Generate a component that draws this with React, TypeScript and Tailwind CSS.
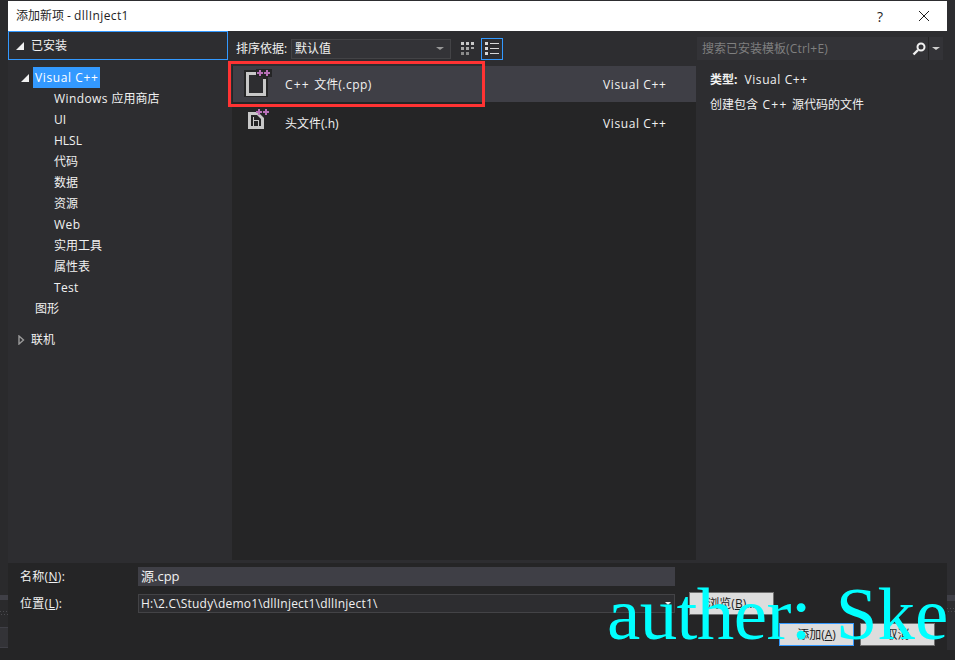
const UI = '"Open Sans","Noto Sans CJK SC",sans-serif';

function L({ children, t = "tracking-[0.6px]" }: { children: React.ReactNode; t?: string }) {
  return <span className={t}>{children}</span>;
}

function Tree({ label, indent = 54 }: { label: React.ReactNode; indent?: number }) {
  return (
    <div className="h-[21px] flex items-center text-[12px] text-[#f1f1f1] whitespace-pre" style={{ paddingLeft: indent - 8 }}>
      {label}
    </div>
  );
}

function Corner() {
  return <path d="M0 8 L8 8 L8 0 Z" fill="#f1f1f1" />;
}

function Grip() {
  return (
    <svg width="8" height="5" viewBox="0 0 8 5" fill="#4a4a4e">
      <path d="M0 0h1v1H0z M3 0h1v1H3z M6 0h1v1H6z M1 3h1v1H1z M4 3h1v1H4z M7 3h1v1H7z" />
    </svg>
  );
}

function CppIcon() {
  return (
    <svg width="28" height="28" viewBox="0 0 28 28" className="shrink-0 mb-[2px]">
      <rect x="0" y="1" width="24" height="27" fill="#252526" />
      <rect x="5" y="6" width="14" height="18" fill="#2d2d30" />
      <path d="M2 3 H14 V6 H5 V24 H19 V10 H22 V27 H2 Z" fill="#c8c8c8" />
      <rect x="12" y="0" width="16" height="8" fill="#252526" />
      <path d="M13 3 h6 v2 h-6z M15 1 h2 v6 h-2z M20 3 h6 v2 h-6z M22 1 h2 v6 h-2z" fill="#b871b8" />
    </svg>
  );
}

function HIcon() {
  return (
    <svg width="22" height="20" viewBox="0 0 22 20" className="shrink-0 mb-[8px]">
      <path d="M0 3 H10 L16 9 V20 H0 Z" fill="#c8c8c8" />
      <path d="M3 6 H9 L13 10 V17 H3 Z" fill="#252526" />
      <path d="M5 8 h1 v3 h5 v6 h-1 v-5 h-4 v5 h-1 z" fill="#c8c8c8" />
      <path d="M8 2 h6 v2 h-6z M10 0 h2 v6 h-2z M15 2 h6 v2 h-6z M17 0 h2 v6 h-2z" fill="#b871b8" />
    </svg>
  );
}

function Row({ icon, pad, name, lang, selected }: { icon: React.ReactNode; pad: string; name: React.ReactNode; lang: string; selected?: boolean }) {
  return (
    <div className={`h-[36px] flex items-center text-[12px] text-[#f1f1f1] ${selected ? "bg-[#3f3f46] ml-px" : "mt-[3px]"}`}>
      <div className={`${selected ? "w-[52px]" : "w-[53px]"} ${pad} flex items-center`}>{icon}</div>
      <div className="flex-1 whitespace-pre pt-[2px]">{name}</div>
      <div className="w-[93px] whitespace-nowrap pt-[2px] tracking-[0.6px]">{lang}</div>
    </div>
  );
}

export default function App() {
  const items: React.ReactNode[] = [
    <>
      <L t="tracking-[0.4px]">Windows </L>应用商店
    </>,
    "UI",
    "HLSL",
    "代码",
    "数据",
    "资源",
    <L t="tracking-[0.5px]">Web</L>,
    "实用工具",
    "属性表",
    <L t="tracking-[0.3px]">Test</L>,
  ];
  return (
    <div className="relative w-[955px] h-[660px] overflow-hidden bg-[#2d2d30] flex" style={{ fontFamily: UI }}>
      <div className="w-[8px] shrink-0 bg-[#2a2a2c] flex flex-col pt-[595px]">
        <div className="h-[5px] shrink-0 bg-[#3f3f46]" />
        <div className="h-[27px] shrink-0 flex items-center"><Grip /></div>
        <div className="h-[21px] shrink-0 bg-[#333337] border-y border-[#3f3f46]" />
        <div className="flex-1 bg-[#252526]" />
      </div>

      <div className="w-[939px] shrink-0 flex flex-col pt-px">
        <div className="h-[30px] shrink-0 bg-white flex items-center pl-[8px] text-[12px] text-[#1e1e1e]">
          <span className="flex-1 whitespace-pre">
            添加新项 - <L t="tracking-[0.4px]">dllInject1</L>
          </span>
          <span className="w-[14px] text-[14px] text-[#1e1e1e] mr-[31px] text-center">?</span>
          <svg width="12" height="12" viewBox="0 0 12 12" className="mr-[17px]">
            <path d="M1 1 L11 11 M11 1 L1 11" stroke="#1e1e1e" strokeWidth="1" fill="none" />
          </svg>
        </div>

        <div className="h-[532px] shrink-0 flex bg-[#2d2d30]">
          {/* left */}
          <div className="w-[220px] shrink-0 text-[12px] text-[#f1f1f1]">
            <div className="h-[29px] border border-[#3399ff] flex items-center w-[220px]">
              <svg width="8" height="8" viewBox="0 0 8 8" className="ml-[7px] mr-[7px]"><Corner /></svg>
              已安装
            </div>
            <div className="mt-[7px]">
              <div className="h-[21px] flex items-center">
                <svg width="8" height="8" viewBox="0 0 8 8" className="ml-[13px] mr-[4px]"><Corner /></svg>
                <span className="bg-[#3399ff] text-white h-[21px] flex items-center px-[2px] tracking-[0.6px]">Visual C++</span>
              </div>
              {items.map((i, n) => (
                <Tree key={n} label={i} />
              ))}
              <Tree label="图形" indent={35} />
              <div className="h-[21px] mt-[10px] flex items-center">
                <svg width="7" height="10" viewBox="0 0 7 10" className="ml-[10px] mr-[6px]">
                  <path d="M1 1 L5.5 5 L1 9 Z" fill="none" stroke="#9a9a9a" strokeWidth="1.4" />
                </svg>
                联机
              </div>
            </div>
          </div>
          <div className="w-[4px] shrink-0" />
          {/* centre */}
          <div className="w-[464px] shrink-0 flex flex-col">
            <div className="h-[35px] shrink-0 flex items-center text-[12px] text-[#f1f1f1]">
              <span className="w-[59px] pl-[4px] whitespace-nowrap">排序依据:</span>
              <div className="w-[160px] h-[20px] bg-[#333337] border border-[#434346] flex items-center pl-[3px] pr-[6px] justify-between">
                <span>默认值</span>
                <span className="w-0 h-0 border-x-[4px] border-x-transparent border-t-[3px] border-t-[#999999]" />
              </div>
              <svg width="13" height="13" viewBox="0 0 13 13" className="ml-[10px]">
                <path d="M0 0h3v3H0z M5 0h3v3H5z M10 0h3v3h-3z" fill="#c8c8c8" />
                <path d="M0 5h3v3H0z M5 5h3v3H5z M10 5h3v2h-3z" fill="#a8a8a8" />
                <path d="M0 10h3v3H0z M5 10h3v3H5z" fill="#8a8a8a" />
              </svg>
              <div className="ml-[7px] w-[22px] h-[22px] border-[1.5px] border-[#3399ff] flex items-center justify-center">
                <svg width="15" height="13" viewBox="0 0 15 13" fill="#d8d8d8">
                  <path d="M0 0h3v3H0z M0 5h3v3H0z M0 10h3v3H0z M5 1h9v1H5z M5 6h9v1H5z M5 11h9v1H5z" />
                </svg>
              </div>
            </div>
            <div className="flex-1 bg-[#252526] mb-[3px]">
              <div className="relative">
                <Row
                  icon={<CppIcon />}
                  pad="pl-[11px]"
                  name={
                    <>
                      <L t="tracking-[1.2px]">C++ </L>文件<L t="tracking-[0.5px]">(.cpp)</L>
                    </>
                  }
                  lang="Visual C++"
                  selected
                />
                <Row icon={<HIcon />} pad="pl-[16px]" name="头文件(.h)" lang="Visual C++" />
                <div className="absolute left-[-4px] top-[-5px] w-[257px] h-[46px] border-[3px] border-[#ff3333]" />
              </div>
            </div>
          </div>
          {/* right */}
          <div className="flex-1 flex flex-col text-[12px] text-[#f1f1f1]">
            <div className="h-[23px] mt-[6px] bg-[#333337] flex items-center ml-[1px] mr-[4px]">
              <span className="flex-1 pl-[5px] text-[#7f7f7f] whitespace-pre">
                搜索已安装模板<L t="tracking-[0.2px]">(Ctrl+E)</L>
              </span>
              <svg width="14" height="14" viewBox="0 0 14 14" className="mr-[2px]">
                <circle cx="9" cy="5" r="3.5" fill="none" stroke="#f1f1f1" strokeWidth="2" />
                <path d="M6 8 L1.5 12.5" stroke="#f1f1f1" strokeWidth="2.4" />
              </svg>
              <div className="w-px h-[23px] bg-[#252526] mr-[3px]" />
              <span className="w-0 h-0 mr-[3px] border-x-[4px] border-x-transparent border-t-[3px] border-t-[#d0d0d0]" />
            </div>
            <div className="ml-[14px] mt-[9px] h-[21px] flex items-center">
              <span className="font-bold mr-[7px]">类型:</span>
              <L>Visual C++</L>
            </div>
            <div className="ml-[14px] mt-[4px] h-[21px] flex items-center whitespace-pre">
              创建包含<L t="tracking-[1.3px]"> C++ </L>源代码的文件
            </div>
          </div>
        </div>

        {/* bottom */}
        <div className="flex-1 bg-[#252526] text-[12px] text-[#f1f1f1] relative">
          <div className="flex items-center h-[19px] mt-[4px]">
            <span className="w-[130px] pl-[12px] tracking-[0.3px]">名称(<u>N</u>):</span>
            <div className="w-[537px] h-[19px] bg-[#3f3f46] flex items-center pl-[3px] text-[13px]">源.cpp</div>
          </div>
          <div className="flex items-center mt-[8px] h-[19px]">
            <span className="w-[130px] pl-[12px] tracking-[0.3px]">位置(<u>L</u>):</span>
            <div className="w-[537px] h-[19px] bg-[#2d2d30] border border-[#434346] flex items-center pl-[2px] justify-between pr-[3px]">
              <span className="tracking-[0.2px]">H:\2.C\Study\demo1\dllInject1\dllInject1\</span>
              <span className="w-0 h-0 border-x-[3px] border-x-transparent border-t-[3px] border-t-[#f1f1f1]" />
            </div>
            <button className="ml-[14px] w-[85px] h-[23px] bg-[#dddddd] border border-[#707070] text-[#1e1e1e] text-[12px]">浏览(<u>B</u>)...</button>
          </div>
          <div className="flex justify-end mt-[10px] gap-[6px] pr-[12px]">
            <button className="w-[75px] h-[23px] bg-[#dddddd] border border-[#3399ff] text-[#1e1e1e] text-[12px]">添加(<u>A</u>)</button>
            <button className="w-[75px] h-[23px] bg-[#dddddd] border border-[#707070] text-[#1e1e1e] text-[12px]">取消</button>
          </div>
        </div>
      </div>

      <div className="w-[8px] shrink-0 bg-[#2d2d30] flex flex-col pt-[595px]">
        <div className="h-[6px] shrink-0 bg-[#3f3f46]" />
        <div className="h-[49px] shrink-0 pt-[7px]"><Grip /></div>
        <div className="flex-1 bg-[#252526]" />
      </div>

      <div className="absolute left-[607px] top-[567px] text-[75px] leading-[94px] text-[#00ffff] whitespace-pre pointer-events-none" style={{ fontFamily: '"Liberation Serif",serif' }}>
        <span className="tracking-[-0.6px]">auther:</span>
        <span className="ml-[6px]"> Ske</span>
      </div>
    </div>
  );
}
